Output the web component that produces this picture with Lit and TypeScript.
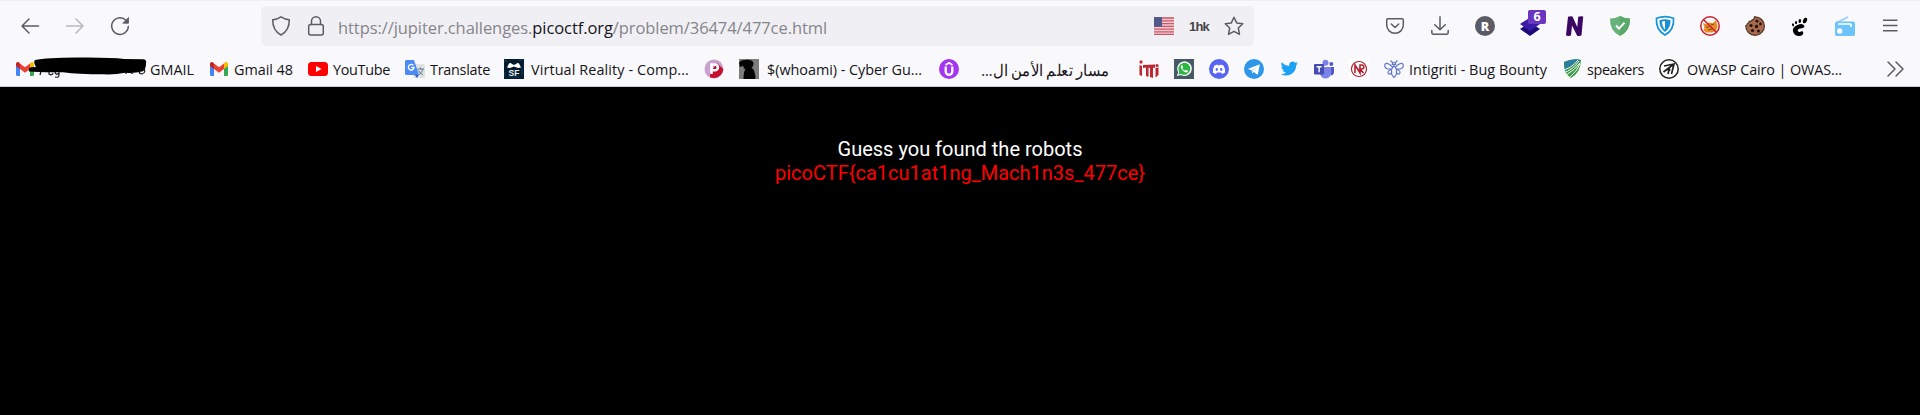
import { LitElement, html, css, svg } from "lit";
import { customElement, property } from "lit/decorators.js";
import { styleMap } from "lit/directives/style-map.js";

/* Text run whose tracking is tuned so it fills an exact advance width. */
@customElement("fit-text")
class FitText extends LitElement {
  @property({ type: Number }) width = 0;
  static styles = css`
    :host { display: block; flex: none; white-space: nowrap; overflow: visible; }
    .run { display: inline-block; white-space: nowrap; }
  `;
  render() { return html`<span class="run"><slot></slot></span>`; }
  async firstUpdated() {
    await document.fonts.ready;
    const run = this.renderRoot.querySelector(".run") as HTMLElement;
    const count = (this.textContent || "").trim().length;
    this.style.width = this.width + "px";
    if (this.dir === "rtl") {
      const k = this.width / run.getBoundingClientRect().width;
      run.style.transform = "scaleX(" + k + ")";
      run.style.transformOrigin = "right";
    } else {
      run.style.letterSpacing = (this.width - run.getBoundingClientRect().width) / count + "px";
    }
  }
}

const line = (body: unknown, w = 20, h = 20) => html`<svg width=${w} height=${h} viewBox="0 0 ${w} ${h}" fill="none" stroke="#5b5b66" stroke-width="1.5" stroke-linecap="round" stroke-linejoin="round">${body}</svg>`;
const pic = (body: unknown) => html`<svg width="20" height="20" viewBox="0 0 20 20">${body}</svg>`;

const gmail = pic(svg`<path d="M1 5v10.500q0 1.500 1.500 1.500H5V8z" fill="#4285f4"/><path d="M19 5v10.500q0 1.500-1.500 1.500H15V8z" fill="#34a853"/><path d="M5 4.500v5.500L1 7V5c0-2 2.200-3 4-.5z" fill="#c5221f"/><path d="M15 4.500v5.500l4-3V5c0-2-2.200-3-4-.5z" fill="#fbbc04"/><path d="M5 4.500l5 3.800 5-3.800V10l-5 3.800L5 10z" fill="#ea4335"/>`);
const I: Record<string, unknown> = {
  gmail,
  youtube: pic(svg`<rect y="3" width="20" height="14" rx="3.500" fill="#f00"/><path d="M8 7l5.500 3L8 13z" fill="#fff"/>`),
  translate: pic(svg`<rect x="8" y="5" width="12" height="14" rx="1.500" fill="#dfe1e5"/><path d="M12.500 10h6.500M15.500 8.500V10M13.500 16q3.500-2 4.500-6M13.500 11.500q1.500 3 4.500 4.500" stroke="#607d8b" fill="none"/><path d="M9 15h5l-2 4z" fill="#2a56c6"/><path d="M1.500 1H9l5 15H1.500Q0 16 0 14.500v-12Q0 1 1.500 1z" fill="#4c8bf5"/><path d="M8.300 6.300A2.800 2.800 0 1 0 9 8.500H6.300" fill="none" stroke="#fff" stroke-width="1.400"/>`),
  sf: pic(svg`<rect width="20" height="20" fill="#061b2e"/><path d="M0 2h3M15 1h4M1 13v5M18 8v8M4 18h11" stroke="#0b4560"/><path d="M3 8.500l2-4q1.500-1 3 .5l2 1 2-1q1.500-1.500 3-.5l2 4-3 .5-4-1.500-4 1.500z" fill="#fff"/><text x="10" y="16.500" text-anchor="middle" font-family="Liberation Sans" font-weight="700" font-size="8.500" fill="#e8eef2">SF</text>`),
  pr: pic(svg`<circle cx="10" cy="10" r="9.500" fill="#c8a2cf"/><path d="M13 4l6.200 6A9.500 9.500 0 0 1 6 18.300V14z" fill="#c8102e"/><path d="M7.500 15V5.500H11a2.900 2.900 0 0 1 0 5.800H8" fill="none" stroke="#fff" stroke-width="2.600"/>`),
  whoami: pic(svg`<rect width="20" height="20" fill="#7d7d7b"/><path d="M0 4Q1.500 .8 8 .8q6.500 0 6.500 4 0 2.700-2 4 3.500 1.500 4 11.200H4.500q0-7 2-10.300H4.800Q5 7.500 4 7L1 8z" fill="#050505"/>`),
  udemy: pic(svg`<circle cx="10" cy="10" r="10" fill="#a435f0"/><path d="M6.500 6L10 3.700 13.500 6" fill="none" stroke="#fff" stroke-width="1.700"/><path d="M6.700 7.500v5a3.300 3.300 0 0 0 6.600 0v-5" fill="none" stroke="#fff" stroke-width="2.300"/>`),
  iti: pic(svg`<path d="M.5 6l2.500 1v10l-2.500-1zM4 6l12-.5V9l-2-.5V19l-3-1V9l-1.500-.5V18l-2.500-1V8.500L4 9zM16.500 9l3-.5V16l-3 2.500z" fill="#bd2630"/><circle cx="2" cy="3" r="1.700" fill="#d0303b"/><circle cx="18" cy="6.500" r="1.500" fill="#bd2630"/>`),
  whatsapp: pic(svg`<rect width="20" height="20" fill="#455a64"/><path d="M3 17l1.100-3.900A7.300 7.300 0 1 1 7 16z" fill="#fff"/><path d="M4.400 15.600l.8-2.700a6 6 0 1 1 2 2z" fill="#2cb742"/><path d="M7.500 6.300q-1.600 1.200.2 3.900 2 3 4.700 3.300 1.700-.2 1.500-1.800l-2-1-1 1.100q-1.900-.8-2.600-2.500l.8-1-.8-2z" fill="#fff"/>`),
  discord: pic(svg`<circle cx="10" cy="10" r="10" fill="#5865f2"/><path d="M5.500 6.400l3-1 .6.900h1.800l.6-.9 3 1q1.900 3 1.600 7-1.400 1.100-3.200 1.400l-.8-1.200H7.900l-.8 1.200q-1.800-.3-3.200-1.400-.3-4 1.600-7z" fill="#fff"/><ellipse cx="7.800" cy="10.500" rx="1.200" ry="1.400" fill="#5865f2"/><ellipse cx="12.200" cy="10.500" rx="1.200" ry="1.400" fill="#5865f2"/>`),
  telegram: pic(svg`<circle cx="10" cy="10" r="10" fill="#2d96e8"/><path d="M3.800 10L15 5.500q.8-.2.700.7l-1.800 8.700q-.3.900-1.200.4L9.800 13l-1.600 1.600-.5-3.300z" fill="#fff"/><path d="M7.700 11.300l5.500-3.800-4.300 4.200-.7 2.900z" fill="#b4d9f5"/>`),
  twitter: html`<svg width="20" height="20" viewBox="-2.500 -1.500 28 28"><path fill="#1da1f2" d="M23.950 4.570a10 10 0 0 1-2.820.77 4.960 4.960 0 0 0 2.160-2.720 9.900 9.900 0 0 1-3.120 1.180 4.920 4.920 0 0 0-8.380 4.480A13.900 13.900 0 0 1 1.640 3.160a4.900 4.900 0 0 0 1.520 6.570 4.900 4.900 0 0 1-2.230-.61v.06a4.920 4.920 0 0 0 3.950 4.830 5 5 0 0 1-2.210.08 4.940 4.940 0 0 0 4.600 3.420A9.870 9.870 0 0 1 0 19.540a14 14 0 0 0 7.550 2.210c9.050 0 14-7.500 14-13.980v-.64a10 10 0 0 0 2.400-2.560z"/></svg>`,
  teams: pic(svg`<circle cx="17.300" cy="5" r="2" fill="#5059c9"/><circle cx="11.500" cy="3.700" r="3" fill="#7b83eb"/><path d="M15 8h5v5.500q-.5 3-3.500 3z" fill="#5059c9"/><path d="M6 8h11v6a5.500 5.500 0 0 1-11 0z" fill="#7b83eb"/><rect y="5" width="10" height="10.500" rx="1" fill="#444bb3"/><path d="M2.600 7.800h5M5.100 7.800v5.400" stroke="#fff" stroke-width="1.400"/>`),
  nr: pic(svg`<rect width="20" height="20" fill="#fff"/><circle cx="10" cy="10" r="7.500" fill="none" stroke="#b3202c" stroke-width="1.200"/><path d="M6 14V6l5 8V6h1.800a2 2 0 0 1 0 4H11l3.500 4" fill="none" stroke="#b3202c" stroke-width="1.600"/>`),
  bee: pic(svg`<g fill="none" stroke="#6478c8" stroke-width="1.200"><path d="M6.500 1.500L8.500 3.500M13.500 1.500L11.500 3.500M8.200 5.500a1.800 1.800 0 0 1 3.600 0zM8.500 8Q3 2.500.8 5.500q-1 5 6.700 4.700M11.500 8Q17 2.500 19.200 5.500q1 5-6.700 4.700M7.300 10.500q-4.500 1.500-3 4 1.500 1.500 3.200-.8M12.700 10.500q4.500 1.500 3 4-1.500 1.500-3.200-.8M10 6.500l2.500 4-.2 5L10 18.500l-2.300-3-.2-5z"/></g>`),
  speakers: pic(svg`<path d="M2 3q9-4 17-2-.5 13-10 18Q1 14 2 3z" fill="#3e9b4c"/><path d="M2 3q9-4 17-2L3 12z" fill="#2d7f9f"/><path d="M0 11Q9 10 16 1M1 14q10-3 16-12M4 16q9-5 14-12M8 18q7-6 10-13" fill="none" stroke="#eef6ee" stroke-width="1"/>`),
  owasp: pic(svg`<circle cx="10" cy="10" r="9.200" fill="#fff" stroke="#222" stroke-width="1.500"/><path d="M5 7l10-2-2.500 10M15 5L4.500 13M7.500 10.500l4 .5M10.500 8.500L9 15" fill="none" stroke="#222" stroke-width="1.700"/>`),
};

type Mark = [icon: string, gap: number, text?: string, width?: number, pad?: number];
/* icon, space before icon, label, label width, space between icon and label */
const marks: Mark[] = [
  ["gmail", 15, "GMAIL", 44, 115], ["gmail", 15, "Gmail 48", 59, 5], ["youtube", 15, "YouTube", 57, 5],
  ["translate", 15, "Translate", 60, 5], ["sf", 14, "Virtual Reality - Comp...", 158, 7],
  ["pr", 15], ["whoami", 15, "$(whoami) - Cyber Gu...", 155, 8], ["udemy", 17, "مسار تعلم الأمن ال...", 128, 22],
  ["iti", 30], ["whatsapp", 15], ["discord", 15], ["telegram", 15], ["twitter", 15], ["teams", 15], ["nr", 15],
  ["bee", 15, "Intigriti - Bug Bounty", 138, 5], ["speakers", 15, "speakers", 57, 5], ["owasp", 15, "OWASP Cairo | OWAS...", 155, 8],
];

const ext: unknown[] = [
  line(svg`<path d="M3 2.800h14q1.300 0 1.300 1.300V9a8.300 8.300 0 0 1-16.600 0V4.100Q1.700 2.800 3 2.800zM6.300 8l3.700 3.500L13.700 8"/>`),
  line(svg`<path d="M10 .8v13M4.700 8.700L10 13.800l5.300-5.100M1.800 14.500v1.800q0 2 2 2h12.400q2 0 2-2v-1.800"/>`),
  pic(svg`<circle cx="10" cy="10" r="10" fill="#5b5b66"/><text x="10" y="14.500" text-anchor="middle" font-family="Open Sans" font-weight="800" font-size="12.500" fill="#fff">R</text>`),
  html`<span class="layers">${pic(svg`<path d="M0 13l10-6.500L20 13l-10 7z" fill="#1b0a78"/><path d="M0 8l10-6.500L20 8l-10 7z" fill="#3b1ba6"/>`)}<b class="badge">6</b></span>`,
  pic(svg`<path d="M1 19.500L3 .8q3-1 4.500-.3L12.300 11 13.200.8q2.500-1 5-.3L16.500 19.500q-2.500.8-4.300.2L7 9.500l-1 10q-2.500.8-5 0z" fill="#3b0764"/>`),
  pic(svg`<path d="M10 0q5 2.500 10 2.500Q20.500 15 10 20-.5 15 0 2.500 5 2.500 10 0z" fill="#67b279"/><path d="M10 0q5 2.500 10 2.500Q20.500 15 10 20z" fill="#5ba86c"/><path d="M6 9.500l3 3.200 5.500-6" fill="none" stroke="#fff" stroke-width="1.900"/>`),
  pic(svg`<path d="M1.500 2.200Q10-1 18.500 2.200 19.500 13.500 10 19 .5 13.500 1.500 2.200z" fill="#fff" stroke="#1793d8" stroke-width="1.700"/><path d="M4.500 4.300q5.500-2 11 0Q16 11.500 10 16 4 11.500 4.500 4.300z" fill="#1a8fd3"/><path d="M7 5.500l3-.5v8.500q-3-3-3-8z" fill="#fff"/>`),
  pic(svg`<path d="M3 7l3 1 3-1.500 4 .5 3-3 1.500 6-1 4-4 2.500H6L3.500 14l1-2z" fill="#ed8c24"/><path d="M6 11h3M11 9l3-1M8 14l4-1" stroke="#7a4a1d"/><circle cx="10" cy="10" r="9.200" fill="none" stroke="#c8202e" stroke-width="1.500"/><path d="M3.500 3.500l13 13" stroke="#c8202e" stroke-width="1.500"/>`),
  pic(svg`<path d="M9.500.8A9.300 9.300 0 1 1 .8 9.500q1.500-.2 1.700-2 1.500-.3 1.800-2.200 2 .5 2.700-1.200Q9.800 3.500 9.500.8z" fill="#a9694a" stroke="#4d342b" stroke-width="1.200"/><g fill="#1d1412"><circle cx="12" cy="5" r="1.600"/><circle cx="6" cy="9.500" r="1.600"/><circle cx="11.500" cy="10.500" r="1.700"/><circle cx="15.500" cy="8" r="1.400"/><circle cx="7.500" cy="14.500" r="1.600"/><circle cx="13.500" cy="15" r="1.500"/></g>`),
  pic(svg`<g transform="translate(-1 1)"><path d="M15.500 9Q13.500 5.800 8.500 8 3 10 4 14.500q1.500 4.500 6 4.500 4.500-.3 4.300-3.200-.2-2-2.500-1.300-1.800 1.400-3-.5-.5-2 2.500-2.500 4-.5 4.200-2.500z"/><ellipse cx="16" cy="3.500" rx="1.900" ry="2.900" transform="rotate(25 16 3.500)"/><ellipse cx="10.800" cy="4" rx="1.300" ry="2" transform="rotate(8 10.800 4)"/><ellipse cx="7" cy="5.600" rx="1.100" ry="1.700"/><ellipse cx="4" cy="7.800" rx="1" ry="1.500" transform="rotate(-20 4 7.800)"/></g>`),
  pic(svg`<path d="M2 6.500L13 1" stroke="#8fd0fb" stroke-width="1.700"/><rect y="5.500" width="20" height="14.500" rx="1.800" fill="#6cc4fb"/><path d="M3 8h13M16 8v3" stroke="#fff" stroke-width="1.500"/><circle cx="4.700" cy="15" r="2.700" fill="#fff"/>`),
  html`<span class="menu">${line(svg`<path d="M3 4.300h14.500M3 9.600h14.500M3 14.800h14.500" stroke-linecap="butt"/>`)}</span>`,
];

@customElement("app-root")
class AppRoot extends LitElement {
  static styles = css`
    :host { display: block; height: 415px; background: #000; overflow: hidden; font-family: "Open Sans", "Noto Sans", sans-serif; }
    svg { display: block; flex: none; overflow: visible; }
    .chrome { box-sizing: border-box; height: 87px; background: #f9f9fb; border-top: 1px solid #f0f0f2; border-bottom: 1px solid #cccccf; }
    .toolbar { display: flex; height: 40px; padding: 5px 20px 0; }
    .nav { display: flex; align-items: center; gap: 25px; width: 241px; flex: none; }
    .dim { opacity: .4; }
    .address { box-sizing: border-box; display: flex; align-items: center; width: 993px; height: 40px; padding: 0 10px; border-radius: 5px; background: #f0f0f4; flex: none; }
    .lock { margin: 0 12px 0 15px; }
    .url { font-size: 16.5px; line-height: 24px; color: #85858b; margin-top: 3px; }
    .host { color: #15141a; }
    .flag { margin-left: auto; }
    .hk { margin: 0 15px; font: 700 13px/20px "Liberation Sans", sans-serif; color: #45454a; margin-top: 1px; }
    .exts { display: flex; align-items: center; gap: 25px; margin-left: 131px; }
    .layers { position: relative; }
    .badge { position: absolute; left: 8px; top: -6px; width: 18px; height: 14px; border-radius: 2px; background: #6a35c0; color: #fff; font: 700 12.500px/14px "Open Sans", sans-serif; text-align: center; }
    .marks { display: flex; align-items: center; height: 40px; padding: 0 15px 0 0; margin-top: 3px; }
    .mark { display: flex; align-items: center; }
    .label { font-size: 14.400px; line-height: 20px; color: #15141a; margin-top: 1px; }
    .label[dir="rtl"] { font-size: 15.500px; }
    .more { margin-left: auto; }
    .first { position: relative; }
    .scribble { position: absolute; left: 28px; top: -2px; }
    main { padding-top: 50px; text-align: center; font: 20px/24px Roboto, sans-serif; color: #fff; display: flex; flex-direction: column; align-items: center; }
    .secret { color: #f00; }
  `;
  render() {
    return html`
      <div class="chrome">
        <div class="toolbar">
          <div class="nav">
            ${line(svg`<path d="M18.500 10H2M9 3l-7 7 7 7"/>`)}
            <span class="dim">${line(svg`<path d="M1.500 10H18M11 3l7 7-7 7"/>`)}</span>
            ${line(svg`<path d="M17.500 6.500a8.300 8.300 0 1 0 .8 4"/><path d="M18.500 1.800v5.400h-5.400z" fill="#5b5b66" stroke-width=".8"/>`)}
          </div>
          <div class="address">
            ${line(svg`<path d="M10 .8q4 2.500 8.300 3Q18.500 14.500 10 19 1.500 14.500 1.700 3.800 6 3.300 10 .8z"/>`)}
            <span class="lock">${line(svg`<rect x="2.700" y="8.500" width="14.600" height="10.500" rx="2"/><path d="M5.500 8.500V5.300a4.500 4.500 0 0 1 9 0v3.200"/>`)}</span>
            <fit-text class="url" .width=${489}>https://jupiter.challenges.<span class="host">picoctf.org</span>/problem/36474/477ce.html</fit-text>
            <svg class="flag" width="20" height="18" viewBox="0 0 20 18"><rect width="20" height="18" fill="#f0cdd2"/><path d="M0 1h20M0 3.800h20M0 6.600h20M0 9.400h20M0 12.200h20M0 14.900h20M0 17.300h20" stroke="#cf5666" stroke-width="1.300"/><rect width="8" height="9.800" fill="#525889"/></svg>
            <fit-text class="hk" .width=${20}>1hk</fit-text>
            ${line(svg`<path d="M10 1.200l2.700 5.700 6.100.8-4.500 4.300 1.200 6.300-5.500-3-5.500 3 1.200-6.300L1.200 7.700l6.100-.8z"/>`)}
          </div>
          <div class="exts">${ext}</div>
        </div>
        <div class="marks">
          ${marks.map(([icon, gap, text, width, pad], i) => html`
            <div class="mark ${i === 0 ? "first" : ""}" style=${styleMap({ paddingLeft: gap + "px" })}>
              ${I[icon]}
              ${text ? html`<fit-text class="label" dir=${icon === "udemy" ? "rtl" : "ltr"} style=${styleMap({ marginLeft: pad + "px" })} .width=${width}>${text}</fit-text>` : ""}
              ${i === 0 ? html`<svg class="scribble" width="120" height="24" viewBox="0 0 120 24"><path d="M13 14l-1 4M21 14v3q3 2 4-1M27 15q1 4 4 1v2q0 3-4 2M98 12v5M102 12q0 5 3 4M115 8q4 8-1 9-3 0-3-3" fill="none" stroke="#15141a" stroke-width="1.200"/><path d="M7 3Q20 0 60 .5q25 0 36 1.500 10 0 19 .3 4 0 3 4.500 0 5-3 7.500-8 2-18 1.500-10 2-22 1.500-25 0-40-2Q10 15.500 1 14.500 0 11 3 10.300l5-.3Q5 5 7 3z"/></svg>` : ""}
            </div>`)}
          <span class="more">${line(svg`<path d="M3 3l7 7-7 7M11 3l7 7-7 7"/>`)}</span>
        </div>
      </div>
      <main>
        <fit-text .width=${245}>Guess you found the robots</fit-text>
        <fit-text class="secret" .width=${370}>picoCTF{ca1cu1at1ng_Mach1n3s_477ce}</fit-text>
      </main>`;
  }
}
